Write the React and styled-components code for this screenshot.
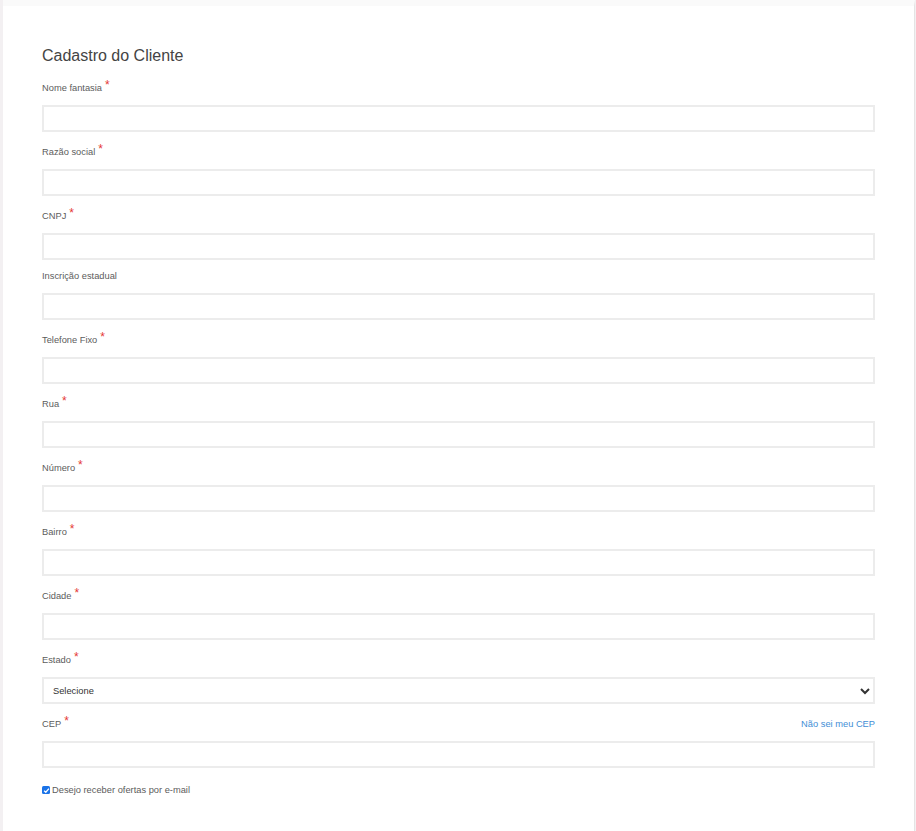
import React from "react";
import styled, { createGlobalStyle } from "styled-components";

const Global = createGlobalStyle`
  html, body { margin: 0; padding: 0; background: #f3f0f2; }
  body { font-family: "Liberation Sans", Arial, sans-serif; }
  * { box-sizing: border-box; }
`;

const Card = styled.div`
  margin-left: 3px;
  width: 912px;
  min-height: 831px;
  background: #fff;
  border-top: 6px solid #fafafa;
  border-right: 1px solid #e4e4e4;
  padding: 40px 39px 20px 39px;
`;

const Title = styled.h2`
  margin: 0 0 10px 0;
  font-size: 16px;
  font-weight: 400;
  color: #444;
  line-height: 20px;
`;

const Group = styled.div`
  margin-bottom: 8px;
`;

const LabelRow = styled.div`
  display: flex;
  justify-content: space-between;
  align-items: flex-end;
  height: ${(p) => (p.$req ? "18px" : "14px")};
  margin-bottom: 11px;
`;

const Label = styled.label`
  font-size: 9.3px;
  color: #5c5c5c;
  line-height: 12px;
`;

const Req = styled.span`
  color: #e53935;
  font-size: 12px;
  position: relative;
  top: -2px;
  margin-left: 3px;
  line-height: 0;
`;

const Input = styled.input`
  display: block;
  width: 100%;
  height: 27px;
  border: 2px solid #ececec;
  background: #fff;
  outline: none;
  padding: 0 10px;
  font-family: inherit;
  font-size: 9.3px;
`;

const SelectWrap = styled.div`
  position: relative;
  height: 27px;
  border: 2px solid #ececec;
  display: flex;
  align-items: center;
  padding: 0 9px;
  font-size: 9.3px;
  color: #333;
`;

const Chevron = styled.svg`
  position: absolute;
  right: 2px;
  top: 7px;
`;

const Link = styled.a`
  font-size: 9.3px;
  color: #3f8ed6;
  text-decoration: none;
  line-height: 12px;
`;

const CheckRow = styled.label`
  display: flex;
  align-items: center;
  gap: 2px;
  margin-top: 17px;
  font-size: 9.3px;
  color: #5c5c5c;
`;

const Box = styled.span`
  width: 8px;
  height: 8px;
  border-radius: 1.5px;
  background: #1a73e8;
  display: inline-flex;
  align-items: center;
  justify-content: center;
`;

const fields = [
  ["Nome fantasia", true],
  ["Razão social", true],
  ["CNPJ", true],
  ["Inscrição estadual", false],
  ["Telefone Fixo", true],
  ["Rua", true],
  ["Número", true],
  ["Bairro", true],
  ["Cidade", true],
];

function Field({ label, req, children, extra }) {
  return (
    <Group>
      <LabelRow $req={req}>
        <Label>
          {label}
          {req && <Req>*</Req>}
        </Label>
        {extra}
      </LabelRow>
      {children}
    </Group>
  );
}

export default function App() {
  return (
    <>
      <Global />
      <Card>
        <Title>Cadastro do Cliente</Title>
        {fields.map(([l, r]) => (
          <Field key={l} label={l} req={r}>
            <Input />
          </Field>
        ))}
        <Field label="Estado" req>
          <SelectWrap>
            Selecione
            <Chevron width="12" height="10" viewBox="0 0 12 10">
              <path d="M2 3 L6 7 L10 3" fill="none" stroke="#333" strokeWidth="2" />
            </Chevron>
          </SelectWrap>
        </Field>
        <Field label="CEP" req extra={<Link href="#">Não sei meu CEP</Link>}>
          <Input />
        </Field>
        <CheckRow>
          <Box>
            <svg width="7" height="7" viewBox="0 0 8 8">
              <path d="M1.3 4.2 L3.2 6 L6.8 1.8" fill="none" stroke="#fff" strokeWidth="1.5" />
            </svg>
          </Box>
          Desejo receber ofertas por e-mail
        </CheckRow>
      </Card>
    </>
  );
}
